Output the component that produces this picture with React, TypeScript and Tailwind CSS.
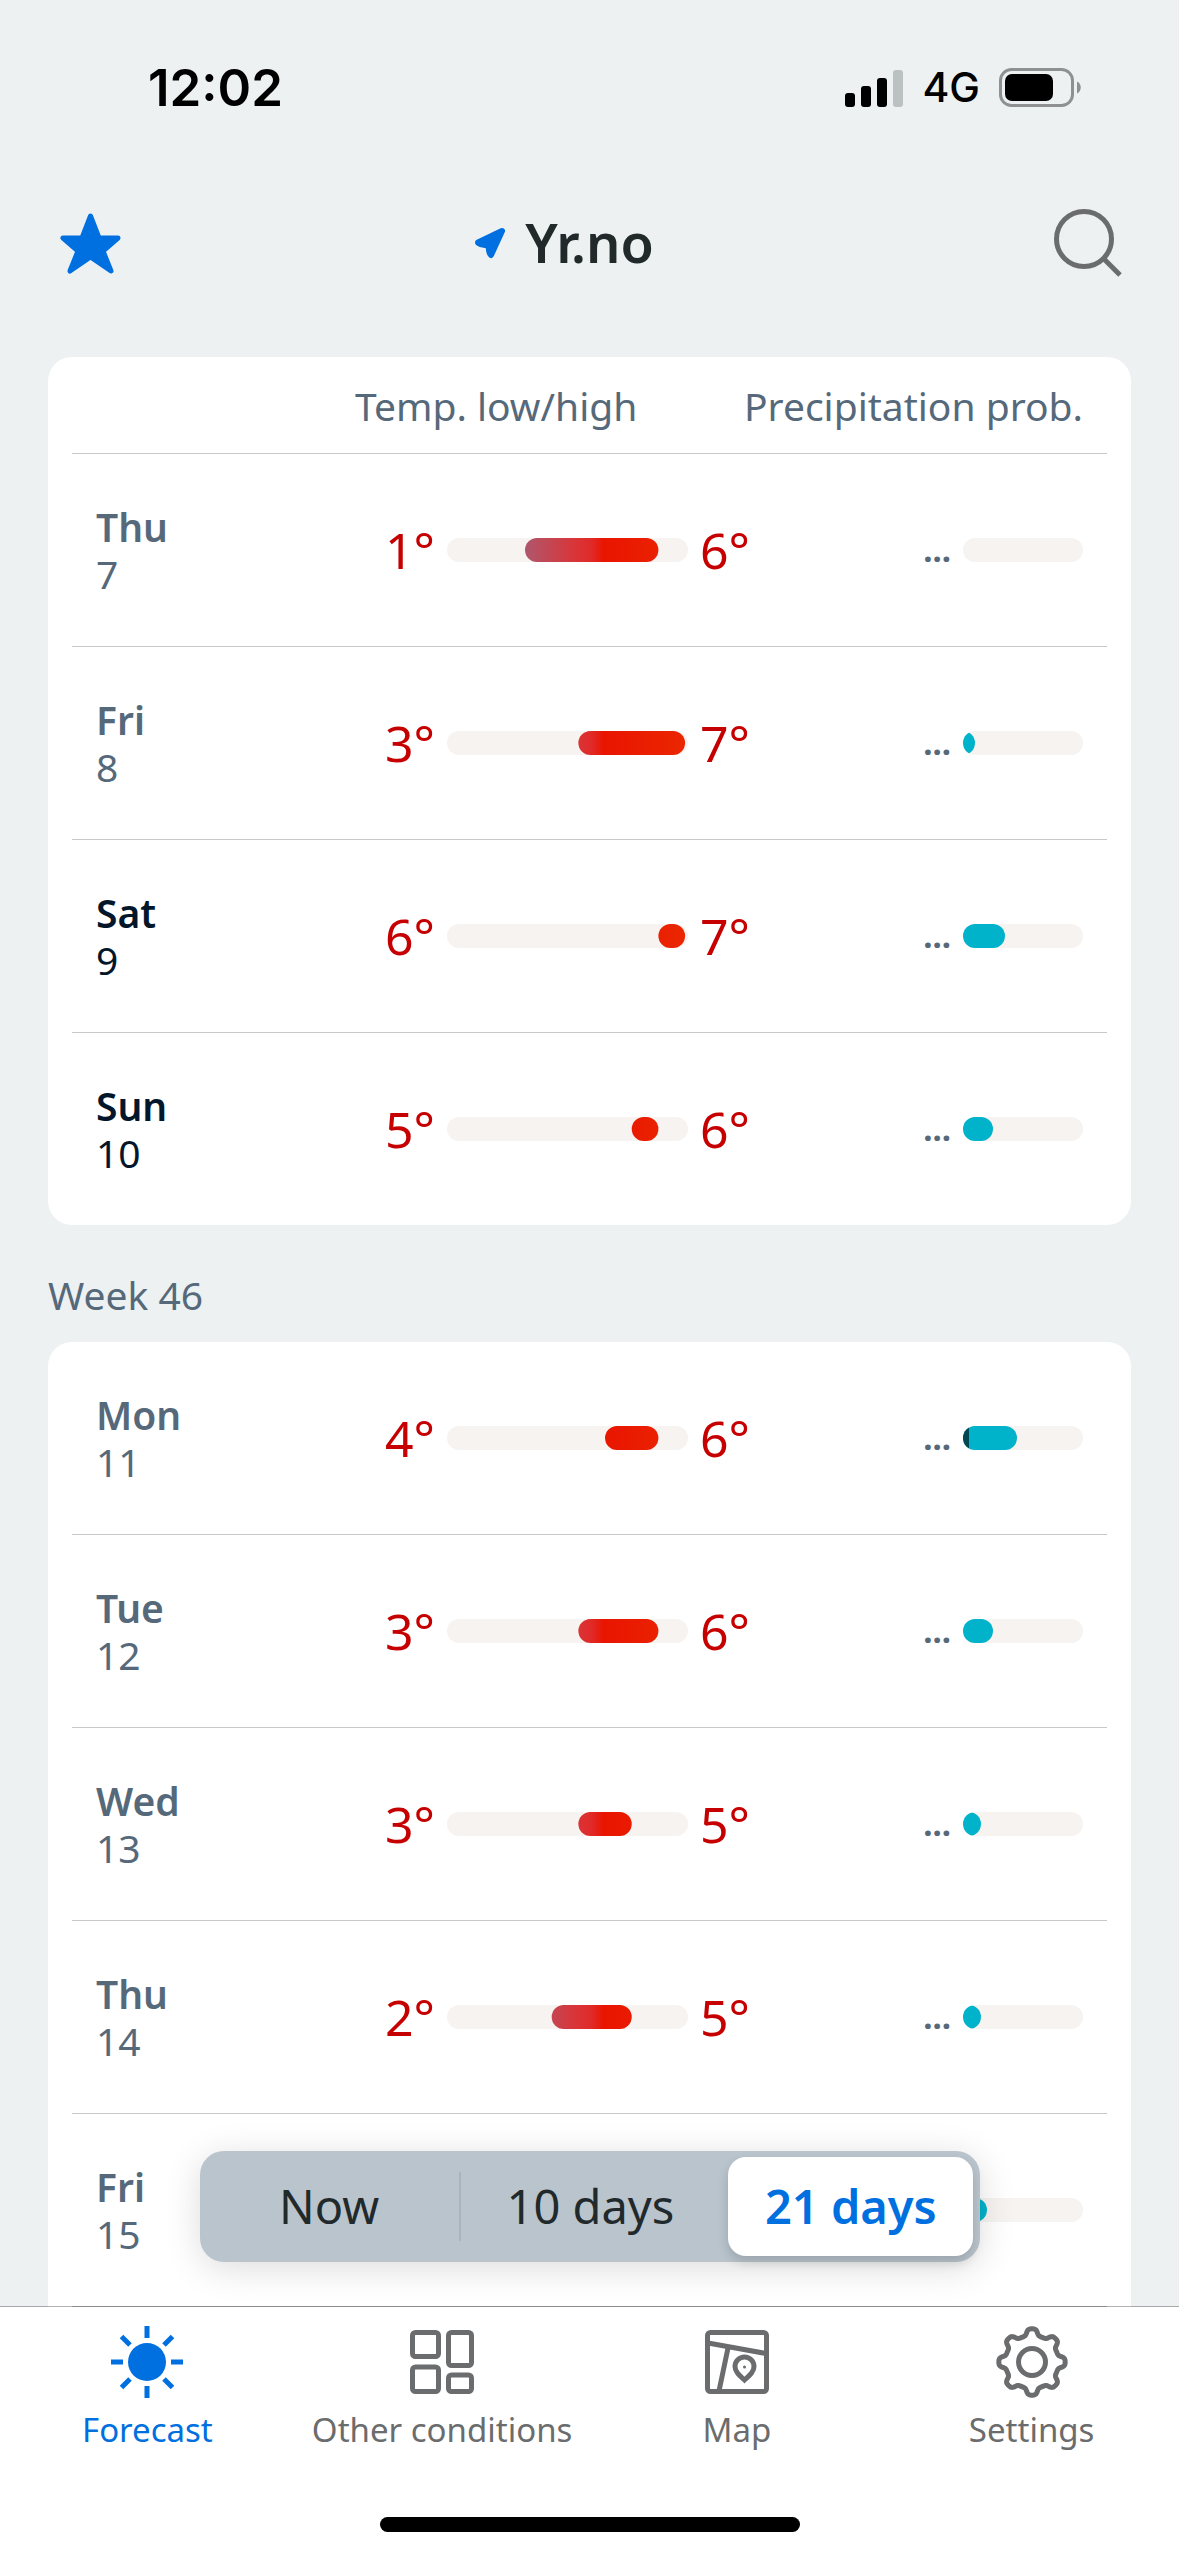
import type { ReactNode } from "react";

type Day = {
	name: string;
	date: number;
	low: number;
	high: number;
	// percent of the precipitation bar
	rain: number;
	heavyRain?: number;
	weekend?: boolean;
};

const thisWeek: Day[] = [
	{ name: "Thu", date: 7, low: 1, high: 6, rain: 0 },
	{ name: "Fri", date: 8, low: 3, high: 7, rain: 10 },
	{ name: "Sat", date: 9, low: 6, high: 7, rain: 35, weekend: true },
	{ name: "Sun", date: 10, low: 5, high: 6, rain: 25, weekend: true },
];

const nextWeek: Day[] = [
	{ name: "Mon", date: 11, low: 4, high: 6, rain: 45, heavyRain: 5 },
	{ name: "Tue", date: 12, low: 3, high: 6, rain: 25 },
	{ name: "Wed", date: 13, low: 3, high: 5, rain: 15 },
	{ name: "Thu", date: 14, low: 2, high: 5, rain: 15 },
	{ name: "Fri", date: 15, low: 2, high: 5, rain: 20 },
];

// position of a temperature on the bar, in percent
const tempPosition = (degrees: number) => 21.3 + 11.07 * degrees;

function TempBar({ low, high }: { low: number; high: number }) {
	const left = tempPosition(low);
	const right = 100 - tempPosition(high);

	return (
		<div className="h-6 w-[241px] rounded-full bg-[#f7f3f1]">
			<div
				className="h-full bg-[linear-gradient(to_right,#9a6285_25%,#b0566b_33%,#dc3234_55%,#e02a29_60%,#e91500_65%,#eb2700_100%)]"
				style={{ clipPath: `inset(0 ${right}% 0 ${left}% round 12px)` }}
			/>
		</div>
	);
}

function RainBar({ rain, heavyRain }: { rain: number; heavyRain?: number }) {
	return (
		<div className="relative h-6 w-[120px] overflow-hidden rounded-full bg-[#f7f3f1]">
			{rain > 0 && (
				<div
					className="-ml-6 h-full rounded-full bg-[#00b3cb]"
					style={{ width: `calc(${rain}% + 24px)` }}
				/>
			)}
			{heavyRain && (
				<div
					className="absolute inset-y-0 left-0 bg-[#004752]"
					style={{ width: `${heavyRain}%` }}
				/>
			)}
		</div>
	);
}

function DayRow({ day, divider }: { day: Day; divider: boolean }) {
	const border = divider ? "border-[#c6c8c9] border-b" : "";

	return (
		<tr>
			<th
				scope="row"
				className={`pl-6 text-left text-[39px] leading-[47px] ${border} ${
					divider ? "h-[193px]" : "h-48"
				} ${day.weekend ? "text-[#04162a]" : "text-[#56697a]"}`}
			>
				<div className="font-semibold">{day.name}</div>
				<div className="font-normal">{day.date}</div>
			</th>
			<td className={border}>
				<div className="flex items-center gap-3 text-[50px] text-[#c60000] leading-none">
					<span className="w-20 text-right">{day.low}°</span>
					<TempBar low={day.low} high={day.high} />
					<span>{day.high}°</span>
				</div>
			</td>
			<td className={`pr-6 ${border}`}>
				<div className="flex items-center justify-end gap-3">
					<span className="font-bold text-[#56697a] text-[33px]">...</span>
					<RainBar rain={day.rain} heavyRain={day.heavyRain} />
				</div>
			</td>
		</tr>
	);
}

function ForecastCard({
	days,
	head,
	continues,
}: {
	days: Day[];
	head?: boolean;
	continues?: boolean;
}) {
	return (
		<section
			className={`bg-white px-6 ${continues ? "rounded-t-3xl" : "rounded-3xl"}`}
		>
			<table className="w-full table-fixed border-separate border-spacing-0">
				<colgroup>
					<col className="w-[283px]" />
					<col />
					<col className="w-[34%]" />
				</colgroup>
				{head && (
					<thead className="whitespace-nowrap text-[#56697a] text-[39px] leading-[47px]">
						<tr>
							<td className="h-[97px] border-[#c6c8c9] border-b" />
							<th
								scope="col"
								className="border-[#c6c8c9] border-b text-left font-normal"
							>
								Temp. low/high
							</th>
							<th
								scope="col"
								className="border-[#c6c8c9] border-b pr-6 font-normal"
							>
								<div className="flex justify-end">Precipitation prob.</div>
							</th>
						</tr>
					</thead>
				)}
				<tbody>
					{days.map((day, i) => (
						<DayRow
							key={day.date}
							day={day}
							divider={continues || i < days.length - 1}
						/>
					))}
				</tbody>
			</table>
		</section>
	);
}

function StatusBar() {
	return (
		<div className="flex h-44 items-center justify-between pr-[98px] pl-[148px] font-['Inter',sans-serif] text-black">
			<span className="font-semibold text-[51px]">12:02</span>
			<div className="flex items-center gap-[19px]">
				<svg width="58" height="38" viewBox="0 0 58 38" aria-hidden="true">
					<rect y="24" width="10" height="14" rx="3" />
					<rect x="16" y="17" width="10" height="21" rx="3" />
					<rect x="32" y="9" width="10" height="29" rx="3" />
					<rect x="48" y="1" width="10" height="37" rx="3" fill="#bbc0c1" />
				</svg>
				<span className="font-medium text-[41px]">4G</span>
				<svg width="82" height="40" viewBox="0 0 82 40" aria-hidden="true">
					<rect
						x="1.5"
						y="1.5"
						width="72"
						height="36"
						rx="11"
						fill="none"
						stroke="#8e9091"
						strokeWidth="3"
					/>
					<rect x="6" y="6" width="48" height="27" rx="7" />
					<path d="M78 13.500c5 2 5 10 0 12z" fill="#8e9091" />
				</svg>
			</div>
		</div>
	);
}

function Header() {
	return (
		<header className="flex h-[133px] items-center justify-between px-[57px]">
			<button type="button" aria-label="Favourite">
				<svg width="68" height="68" viewBox="0 0 68 68" aria-hidden="true">
					<path
						d="M33.500 7 42 29H61L46 42 54 62 33.500 48 13 62 21 42 6 29H25Z"
						fill="#006fe0"
						stroke="#006fe0"
						strokeWidth="5"
						strokeLinejoin="round"
					/>
				</svg>
			</button>
			<h1 className="relative font-semibold text-[#21292b] text-[54px]">
				<svg
					className="absolute top-1/2 right-full mr-[19px] -translate-y-1/2"
					width="32"
					height="32"
					viewBox="0 0 32 32"
					aria-hidden="true"
				>
					<path
						d="M28 4 4 15.500Q4 17 14.500 18.500 15 27 17 28Z"
						fill="#006fe0"
						stroke="#006fe0"
						strokeWidth="6"
						strokeLinejoin="round"
					/>
				</svg>
				Yr.no
			</h1>
			<button type="button" aria-label="Search">
				<svg
					width="68"
					height="68"
					viewBox="0 0 68 68"
					fill="none"
					stroke="#6a6c6d"
					strokeWidth="5"
					aria-hidden="true"
				>
					<circle cx="30" cy="30" r="27.500" />
					<path d="M50 50 66 66" />
				</svg>
			</button>
		</header>
	);
}

const ranges = ["Now", "10 days", "21 days"];

function RangePicker({ selected }: { selected: string }) {
	return (
		<div className="absolute bottom-[45px] left-1/2 flex h-[111px] w-[780px] max-w-full -translate-x-1/2 items-center rounded-3xl bg-[#b9c4cd] text-[#21292b] text-[47px] shadow-[0_6px_36px_rgba(0,0,0,0.14)]">
			{ranges.map((range, i) => (
				<div
					key={range}
					className={`flex flex-1 ${i === 0 ? "border-[#a9b4bd] border-r-2" : ""}`}
				>
					<button
						type="button"
						aria-pressed={range === selected}
						className={
							range === selected
								? "mr-1.5 ml-2 h-[99px] flex-1 rounded-[18px] bg-white font-semibold text-[#006fe0] shadow-[0_6px_12px_rgba(0,0,0,0.16)]"
								: "h-[69px] flex-1 leading-none"
						}
					>
						{range}
					</button>
				</div>
			))}
		</div>
	);
}

// cog outline with eight teeth, drawn round (36, 36)
const cogPoints = Array.from({ length: 240 }, (_, i) => {
	const angle = (i / 240) * 2 * Math.PI;
	const tooth = Math.tanh(2 * Math.cos(8 * angle) - 0.3);
	const radius = 30 + 3.4 * tooth;
	return `${(36 + radius * Math.sin(angle)).toFixed(2)},${(36 - radius * Math.cos(angle)).toFixed(2)}`;
}).join(" ");

function SunIcon() {
	return (
		<>
			<circle cx="36" cy="36" r="19" fill="currentColor" stroke="none" />
			<path d="M36 0v12M36 60v12M0 36h12M60 36h12M10.500 10.500l8.500 8.500M53 53l8.500 8.500M61.500 10.500 53 19M19 53l-8.500 8.500" />
		</>
	);
}

function TilesIcon() {
	return (
		<>
			<rect x="6.500" y="6.500" width="26" height="24" rx="3" />
			<rect x="6.500" y="41" width="26" height="24.500" rx="3" />
			<rect x="42.500" y="6.500" width="23" height="33" rx="3" />
			<rect x="42.500" y="49" width="23" height="16.500" rx="3" />
		</>
	);
}

function MapIcon() {
	return (
		<>
			<rect x="6.500" y="6.500" width="59" height="59" rx="3" />
			<path d="M7 17 65 27.500M27 22 18 65" />
			<path d="M43.500 54C37 48 34 45 34 40.500a9.500 9.500 0 0 1 19 0C53 45 50 48 43.500 54Z" />
			<circle cx="43.500" cy="41" r="1.500" fill="currentColor" stroke="none" />
		</>
	);
}

function CogIcon() {
	return (
		<>
			<polygon points={cogPoints} strokeLinejoin="round" />
			<circle cx="36" cy="36" r="13.500" />
		</>
	);
}

const tabs: { label: string; icon: ReactNode; active?: boolean }[] = [
	{ label: "Forecast", icon: <SunIcon />, active: true },
	{ label: "Other conditions", icon: <TilesIcon /> },
	{ label: "Map", icon: <MapIcon /> },
	{ label: "Settings", icon: <CogIcon /> },
];

function TabBar() {
	return (
		<nav className="relative -mt-px border-black/30 border-t bg-white bg-clip-padding pt-[19px] pb-6">
			<div className="grid grid-cols-4">
				{tabs.map((tab) => (
					<a
						key={tab.label}
						href="#"
						className={`flex flex-col items-center gap-3 whitespace-nowrap text-[33px] leading-10 ${
							tab.active ? "text-[#006fe0]" : "text-[#6a6c6d]"
						}`}
					>
						<svg
							width="72"
							height="72"
							viewBox="0 0 72 72"
							fill="none"
							stroke="currentColor"
							strokeWidth="5"
							aria-hidden="true"
						>
							{tab.icon}
						</svg>
						{tab.label}
					</a>
				))}
			</div>
			<div className="mx-auto mt-[67px] h-[15px] w-[420px] rounded-full bg-black" />
		</nav>
	);
}

export default function App() {
	return (
		<div className="flex h-screen flex-col bg-[#edf1f2] font-['Noto_Sans',sans-serif]">
			<StatusBar />
			<Header />
			<div className="relative min-h-0 flex-1">
				<main className="h-full overflow-y-auto px-12 pt-12 [scrollbar-width:none]">
					<ForecastCard days={thisWeek} head />
					<h2 className="pt-[46px] pb-6 text-[#56697a] text-[39px] leading-[47px]">
						Week 46
					</h2>
					<ForecastCard days={nextWeek} continues />
				</main>
				<RangePicker selected="21 days" />
			</div>
			<TabBar />
		</div>
	);
}
